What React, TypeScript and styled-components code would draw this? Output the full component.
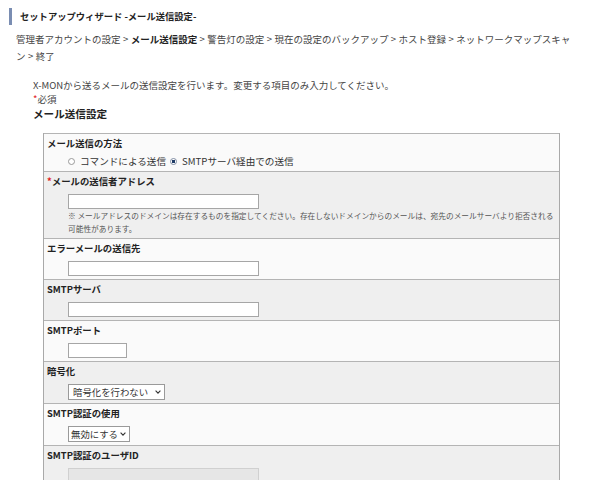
import { FC } from "react";
import styled, { createGlobalStyle } from "styled-components";

const GlobalStyle = createGlobalStyle`
  html, body {
    margin: 0;
    padding: 0;
    overflow: hidden;
    background: #ffffff;
  }
  body {
    font-family: "Noto Sans CJK JP", "Noto Sans", sans-serif;
    color: #333333;
  }
`;

const Page = styled.div`
  width: 600px;
  padding-top: 8px;
`;

const TitleBar = styled.h1`
  margin: 0 0 0 9px;
  border-left: 3px solid #7a8db2;
  padding-left: 8px;
  font-size: 9.3px;
  line-height: 17px;
  font-weight: bold;
  color: #222222;
`;

const Breadcrumb = styled.p`
  margin: 6px 0 0 16px;
  width: 559px;
  font-size: 9.5px;
  line-height: 17px;
  color: #444444;
`;

const Current = styled.b`
  color: #222222;
`;

const Sep = styled.span`
  margin: 0 0.3px;
`;

const Content = styled.section`
  padding: 13px 0 0 33px;
`;

const Intro = styled.p`
  margin: 0;
  font-size: 9.5px;
  line-height: 14px;
  color: #444444;
`;

const Star = styled.span`
  color: #e0201c;
`;

const Heading = styled.h2`
  margin: 0;
  font-size: 10.6px;
  line-height: 16px;
  font-weight: bold;
  color: #222222;
`;

const FormTable = styled.div`
  margin: 11px 0 0 10px;
  width: 515px;
  border: 1px solid #a9a9a9;
  border-top: none;
`;

const Row = styled.div<{ $shade?: boolean }>`
  border-top: 1px solid #b4b4b4;
  background: ${(p) => (p.$shade ? "#efefef" : "#fafafa")};
  padding: 2px 3px 3px;
`;

const Label = styled.div`
  font-size: 9.4px;
  line-height: 14px;
  font-weight: bold;
  color: #222222;
`;

const Field = styled.div<{ $gap?: number }>`
  margin: ${(p) => p.$gap ?? 6}px 0 0 21px;
  display: flex;
  flex-direction: column;
  align-items: flex-start;
`;

const TextInput = styled.input<{ $width: number }>`
  box-sizing: border-box;
  display: block;
  width: ${(p) => p.$width}px;
  height: 15px;
  margin: 0;
  padding: 0 3px;
  border: 1px solid #a6a6a6;
  border-radius: 0;
  background: #ffffff;
  font-family: inherit;
  font-size: 9px;
  &:disabled {
    background: #e6e6e6;
    border-color: #d0d0d0;
  }
`;

const Note = styled.p`
  margin: 0;
  font-size: 7.7px;
  line-height: 13px;
  color: #555555;
`;

const RadioGroup = styled.div`
  display: flex;
  align-items: center;
  gap: 4px;
  height: 14px;
  font-size: 9.6px;
  color: #333333;
`;

const RadioLabel = styled.label`
  display: inline-flex;
  align-items: center;
  gap: 3px;
`;

const Radio = styled.input`
  appearance: none;
  box-sizing: border-box;
  width: 7px;
  height: 7px;
  margin: 0 2px 0 0;
  border: 1px solid #999999;
  border-radius: 50%;
  background: #ffffff;
  &:checked {
    border-color: #7f8ca3;
    background: radial-gradient(circle, #1f3b66 0 1.6px, #ffffff 1.9px);
  }
`;

const SelectWrap = styled.span`
  position: relative;
  display: inline-flex;
`;

const Select = styled.select<{ $width: number; $pad: number }>`
  appearance: none;
  box-sizing: border-box;
  display: block;
  width: ${(p) => p.$width}px;
  height: 16px;
  margin: 0;
  padding: 0 0 0 ${(p) => p.$pad}px;
  border: 1px solid #9a9a9a;
  border-radius: 0;
  background: #ffffff;
  font-family: inherit;
  font-size: 9.4px;
  line-height: 14px;
  color: #333333;
`;

const Chevron = styled.svg`
  position: absolute;
  right: 4px;
  top: 6px;
  width: 6px;
  height: 4px;
  pointer-events: none;
`;

interface IDropdown {
  width: number;
  pad: number;
  options: string[];
}

const Dropdown: FC<IDropdown> = ({ width, pad, options }) => (
  <SelectWrap>
    <Select $width={width} $pad={pad} defaultValue={options[0]}>
      {options.map((o) => (
        <option key={o}>{o}</option>
      ))}
    </Select>
    <Chevron viewBox="0 0 6 4">
      <path d="M0.6 0.6 L3 3.1 L5.4 0.6" fill="none" stroke="#333" strokeWidth="1.1" />
    </Chevron>
  </SelectWrap>
);

const steps = [
  "管理者アカウントの設定",
  "メール送信設定",
  "警告灯の設定",
  "現在の設定のバックアップ",
  "ホスト登録",
  "ネットワークマップスキャン",
  "終了",
];

const App: FC = () => {
  return (
    <Page>
      <GlobalStyle />
      <TitleBar>セットアップウィザード -メール送信設定-</TitleBar>
      <Breadcrumb>
        {steps.map((s, i) => (
          <span key={s}>
            {i > 0 && <Sep> &gt; </Sep>}
            {i === 1 ? <Current>{s}</Current> : s}
          </span>
        ))}
      </Breadcrumb>
      <Content>
        <Intro>
          X-MONから送るメールの送信設定を行います。変更する項目のみ入力してください。
        </Intro>
        <Intro>
          <Star>*</Star>必須
        </Intro>
        <Heading>メール送信設定</Heading>

        <FormTable>
          <Row>
            <Label>メール送信の方法</Label>
            <Field $gap={4}>
              <RadioGroup>
                <RadioLabel>
                  <Radio type="radio" name="method" />
                  コマンドによる送信
                </RadioLabel>
                <RadioLabel>
                  <Radio type="radio" name="method" defaultChecked />
                  SMTPサーバ経由での送信
                </RadioLabel>
              </RadioGroup>
            </Field>
          </Row>

          <Row $shade>
            <Label>
              <Star>*</Star>メールの送信者アドレス
            </Label>
            <Field>
              <TextInput $width={191} />
              <Note>
                ※
                メールアドレスのドメインは存在するものを指定してください。存在しないドメインからのメールは、宛先のメールサーバより拒否される可能性があります。
              </Note>
            </Field>
          </Row>

          <Row>
            <Label>エラーメールの送信先</Label>
            <Field>
              <TextInput $width={191} />
            </Field>
          </Row>

          <Row $shade>
            <Label>SMTPサーバ</Label>
            <Field>
              <TextInput $width={191} />
            </Field>
          </Row>

          <Row>
            <Label>SMTPポート</Label>
            <Field>
              <TextInput $width={59} />
            </Field>
          </Row>

          <Row $shade>
            <Label>暗号化</Label>
            <Field>
              <Dropdown width={97} pad={4} options={["暗号化を行わない", "SSL/TLS", "STARTTLS"]} />
            </Field>
          </Row>

          <Row>
            <Label>SMTP認証の使用</Label>
            <Field>
              <Dropdown width={62} pad={2} options={["無効にする", "有効にする"]} />
            </Field>
          </Row>

          <Row $shade>
            <Label>SMTP認証のユーザID</Label>
            <Field>
              <TextInput $width={191} disabled />
            </Field>
          </Row>

          <Row>
            <Label>SMTP認証のパスワード</Label>
            <Field>
              <TextInput $width={191} type="password" disabled />
            </Field>
          </Row>
        </FormTable>
      </Content>
    </Page>
  );
};

export default App;
